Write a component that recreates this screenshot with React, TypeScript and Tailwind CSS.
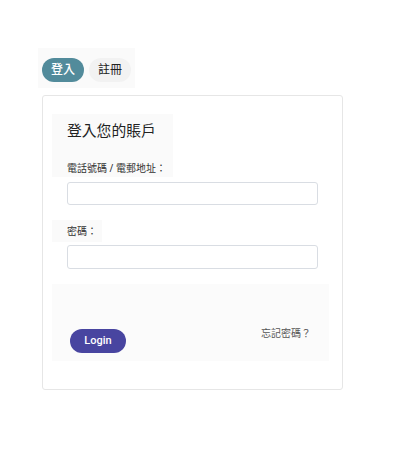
import React from "react";

const cjk = { fontFamily: '"Noto Sans", "Noto Sans CJK TC", sans-serif' };

export default function App() {
  return (
    <div className="min-h-[450px] w-[400px] bg-white pl-[38px] pt-[48px]" style={cjk}>
      <div className="flex w-[97px] gap-[5px] bg-[#fafafa] px-[4px] pb-[6px] pt-[10px]">
        <button className="flex h-[24px] w-[43px] items-center justify-center rounded-full bg-[#528b9b] text-[12px] font-medium text-white">
          登入
        </button>
        <button className="flex h-[24px] w-[43px] items-center justify-center rounded-full bg-[#f2f2f2] text-[12px] font-normal text-[#222]">
          註冊
        </button>
      </div>

      <div className="ml-[4px] mt-[7px] h-[295px] w-[301px] rounded-[3px] border border-[#e6e6e6] bg-white pl-[9px] pt-[18px]">
        <div className="w-[121px] bg-[#fafafa] px-[15px] pb-[2px] pt-[6px]">
          <div className="text-[14.8px] leading-[20px] text-[#222]">登入您的賬戶</div>
          <div className="mt-[21px] whitespace-nowrap text-[10px] font-normal leading-[14px] text-[#333]">
            電話號碼 / 電郵地址：
          </div>
        </div>
        <input
          className="ml-[15px] mt-[5px] block h-[23px] w-[251px] rounded-[3px] border border-[#d9dde3] bg-white"
          type="text"
        />
        <div className="mt-[15px] flex h-[22px] w-[50px] items-center bg-[#fafafa] px-[15px]">
          <span className="whitespace-nowrap text-[10px] font-normal text-[#333]">密碼：</span>
        </div>
        <input
          className="ml-[15px] mt-[3px] block h-[24px] w-[251px] rounded-[3px] border border-[#d9dde3] bg-white"
          type="password"
        />
        <div className="mt-[15px] flex h-[77px] w-[277px] items-end justify-between bg-[#fbfbfb] px-[18px] pb-[8px]">
          <button
            className="flex h-[24px] w-[56px] items-center justify-center rounded-full bg-[#4845a0] text-[11px] font-medium text-white"
            style={{ fontFamily: "Roboto, sans-serif" }}
          >
            Login
          </button>
          <span className="mb-[13px] text-[10px] leading-[14px] text-[#555]">忘記密碼？</span>
        </div>
      </div>
    </div>
  );
}
